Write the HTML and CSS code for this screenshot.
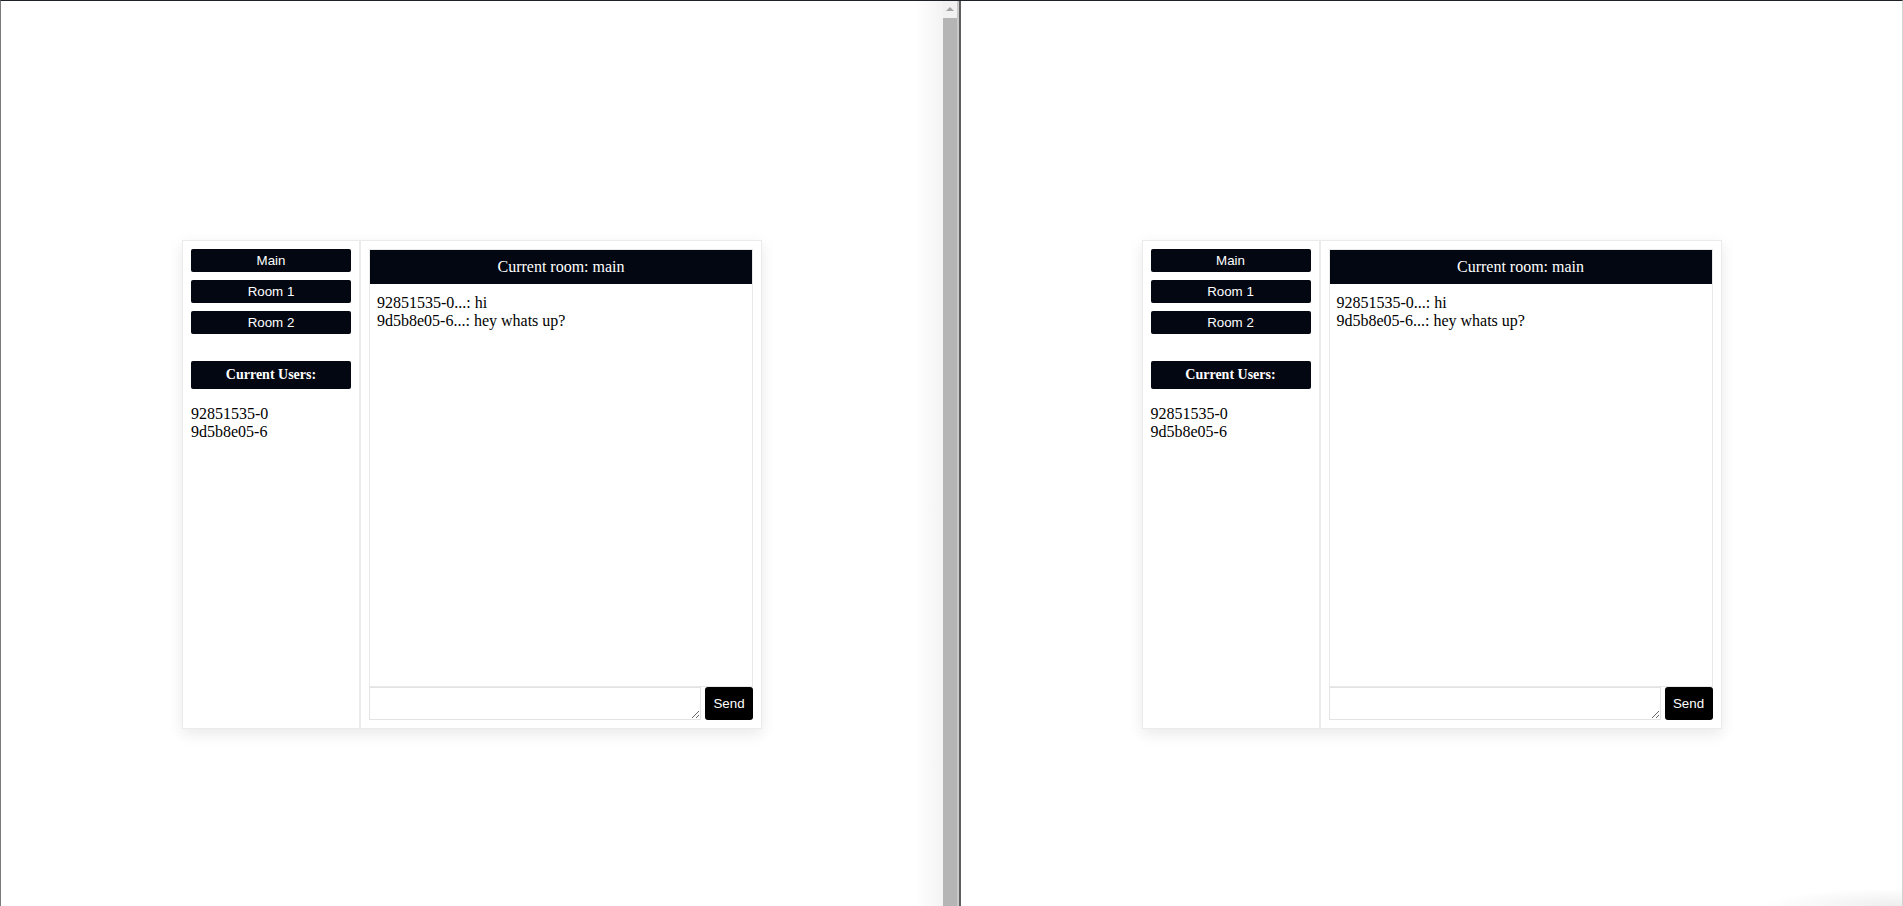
FILE: index.html
```html
<!DOCTYPE html>
<html lang="en">
<head>
<meta charset="utf-8">
<title>Chat rooms</title>
<link rel="stylesheet" href="styles.css">
</head>
<body>
<div class="screen">
  <div class="pane pane-left">
    <div class="viewport">
      <div class="card">
        <aside class="sidebar">
          <button class="room-btn">Main</button>
          <button class="room-btn">Room 1</button>
          <button class="room-btn">Room 2</button>
          <div class="users-head">Current Users:</div>
          <div class="users">
            <div>92851535-0</div>
            <div>9d5b8e05-6</div>
          </div>
        </aside>
        <section class="chat">
          <div class="chat-box">
            <div class="chat-head">Current room: main</div>
            <div class="messages">
              <div>92851535-0...: hi</div>
              <div>9d5b8e05-6...: hey whats up?</div>
            </div>
          </div>
          <div class="input-row">
            <textarea class="msg-input"></textarea>
            <button class="send-btn">Send</button>
          </div>
        </section>
      </div>
    </div>
    <div class="scrollbar">
      <div class="arrow"></div>
      <div class="thumb"></div>
    </div>
  </div>
  <div class="divider"></div>
  <div class="pane pane-right">
    <div class="viewport">
      <div class="card">
        <aside class="sidebar">
          <button class="room-btn">Main</button>
          <button class="room-btn">Room 1</button>
          <button class="room-btn">Room 2</button>
          <div class="users-head">Current Users:</div>
          <div class="users">
            <div>92851535-0</div>
            <div>9d5b8e05-6</div>
          </div>
        </aside>
        <section class="chat">
          <div class="chat-box">
            <div class="chat-head">Current room: main</div>
            <div class="messages">
              <div>92851535-0...: hi</div>
              <div>9d5b8e05-6...: hey whats up?</div>
            </div>
          </div>
          <div class="input-row">
            <textarea class="msg-input"></textarea>
            <button class="send-btn">Send</button>
          </div>
        </section>
      </div>
    </div>
  </div>
</div>
</body>
</html>
```
FILE: styles.css
```css
* { box-sizing: border-box; }
html, body { margin: 0; padding: 0; background: #fff; }
body { font-family: "Liberation Serif", "Times New Roman", serif; color: #000; overflow: hidden; }

.screen {
  display: flex;
  width: 1903px;
  height: 906px;
  border-top: 1px solid #1e2227;
  border-left: 1px solid #7a7a7a;
  border-right: 1px solid #d2d2d2;
  overflow: hidden;
}

.pane { display: flex; height: 100%; }
.pane-left { width: 958px; flex: none; }
.pane-right { flex: 1; }

.viewport {
  flex: 1;
  display: flex;
  justify-content: center;
  align-items: flex-start;
  padding-top: 239px;
}
.pane-left .viewport {
  background: linear-gradient(to right, #fff calc(100% - 28px), #f3f3f3 100%);
}
.pane-right .viewport {
  background: radial-gradient(ellipse 140px 18px at 100% 100%, rgba(0,0,0,0.07), rgba(0,0,0,0) 100%);
}

.scrollbar {
  width: 16px;
  display: flex;
  flex-direction: column;
  background: #f1f1f1;
  border-right: 2px solid #c9c9c9;
}
.arrow {
  width: 0; height: 0;
  margin: 6px auto 0;
  border-left: 4px solid transparent;
  border-right: 4px solid transparent;
  border-bottom: 4px solid #a3a3a3;
}
.thumb {
  flex: 1;
  margin-top: 7px;
  background: #b5b5b5;
}

.divider { width: 2px; flex: none; background: #5e5e5e; }

.card {
  width: 580px;
  height: 489px;
  display: flex;
  background: #fff;
  border: 1px solid #ebebeb;
  box-shadow: 0 5px 14px rgba(0, 0, 0, 0.09);
}

.sidebar {
  width: 178px;
  flex: none;
  padding: 8px;
  border-right: 2px solid #ebebeb;
  display: flex;
  flex-direction: column;
}

.room-btn {
  display: block;
  width: 160px;
  height: 23px;
  margin: 0 0 8px;
  padding: 0;
  border: none;
  border-radius: 2px;
  background: #020712;
  color: #fff;
  font-family: "Liberation Sans", Arial, sans-serif;
  font-size: 13.333px;
}
.room-btn:nth-of-type(3) { margin-bottom: 27px; }

.users-head {
  height: 28px;
  display: flex;
  align-items: center;
  justify-content: center;
  background: #020712;
  color: #fff;
  border-radius: 2px;
  font-weight: bold;
  font-size: 14px;
}

.users {
  margin-top: 16px;
  font-size: 16px;
}

.chat {
  flex: 1;
  padding: 8px;
  display: flex;
  flex-direction: column;
}

.chat-box {
  flex: 1;
  border: 1px solid #e8e8e8;
  display: flex;
  flex-direction: column;
}

.chat-head {
  height: 34px;
  display: flex;
  align-items: center;
  justify-content: center;
  background: #020712;
  color: #fff;
  font-size: 16px;
}

.messages {
  padding: 10px 7px;
  font-size: 16px;
}

.input-row {
  display: flex;
  gap: 4px;
  height: 33px;
}

.msg-input {
  width: 332px;
  height: 33px;
  margin: 0;
  padding: 2px;
  border: 1px solid #e3e3e3;
  overflow: hidden;
  font-family: "Liberation Mono", monospace;
  font-size: 13px;
}

.send-btn {
  width: 48px;
  height: 33px;
  padding: 0;
  border: none;
  border-radius: 3px;
  background: #000;
  color: #fff;
  font-family: "Liberation Sans", Arial, sans-serif;
  font-size: 13.333px;
}
```
